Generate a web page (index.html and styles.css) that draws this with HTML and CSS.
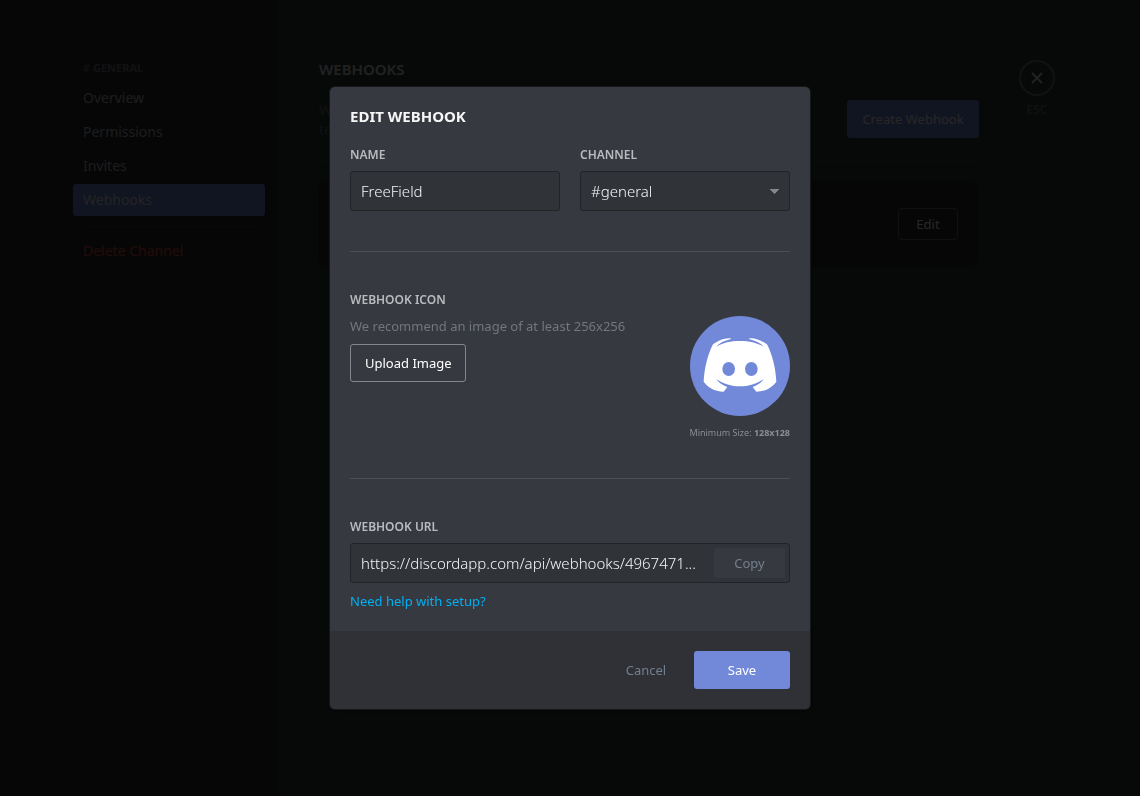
FILE: index.html
```html
<!DOCTYPE html>
<html lang="en">
<head>
<meta charset="utf-8">
<meta name="viewport" content="width=device-width, initial-scale=1">
<title>Edit Webhook</title>
<link rel="stylesheet" href="styles.css">
</head>
<body>
<div class="settings">
  <aside class="sidebar">
    <nav class="nav">
      <h2 class="nav-title"><span class="hash">#</span> General</h2>
      <a class="nav-item" href="#overview">Overview</a>
      <a class="nav-item" href="#permissions">Permissions</a>
      <a class="nav-item" href="#invites">Invites</a>
      <a class="nav-item selected" href="#webhooks">Webhooks</a>
      <hr class="nav-rule">
      <a class="nav-item danger" href="#delete">Delete Channel</a>
    </nav>
  </aside>
  <main class="content">
    <h1 class="content-title">Webhooks</h1>
    <div class="intro">
      <p class="intro-text">We<br>text</p>
      <button class="button primary create" type="button">Create Webhook</button>
    </div>
    <div class="card">
      <button class="button outline edit" type="button">Edit</button>
    </div>
  </main>
  <div class="tools">
    <button class="close" type="button" aria-label="Close settings">
      <svg class="close-icon" viewBox="0 0 12 12" aria-hidden="true"><path d="M1 1L11 11M11 1L1 11"/></svg>
    </button>
    <span class="esc">ESC</span>
  </div>
</div>

<div class="backdrop">
  <form class="modal" role="dialog" aria-labelledby="modal-title">
    <div class="modal-body">
      <h2 class="modal-title" id="modal-title">Edit Webhook</h2>
      <div class="fields">
        <div class="field">
          <label class="label" for="name">Name</label>
          <input class="input" id="name" type="text" value="FreeField">
        </div>
        <div class="field">
          <label class="label" for="channel">Channel</label>
          <select class="input select" id="channel"><option>#general</option></select>
        </div>
      </div>
      <hr class="rule">
      <div class="icon-row">
        <div class="icon-info">
          <h3 class="label">Webhook Icon</h3>
          <p class="hint">We recommend an image of at least 256x256</p>
          <button class="button outline upload" type="button">Upload Image</button>
        </div>
        <div class="icon-preview">
          <svg class="avatar" viewBox="0 0 300 300" role="img" aria-label="Webhook icon">
            <circle cx="150" cy="150" r="150" fill="#7289da"/>
            <path fill="#fff" d="M123 67C104 65 84 74 68 86C53 118 43 154 41 197C54 214 72 226 101 227L112 213C97 208 87 201 79 189C100 204 125 211 150 211C175 211 200 204 221 189C213 201 203 208 188 213L199 227C228 226 246 214 259 197C257 154 247 118 232 86C216 74 196 65 177 67L179 70C197 74 211 81 223 93C201 80 178 75 150 75C122 75 99 80 77 93C89 81 103 74 121 70Z"/>
            <ellipse cx="116" cy="159" rx="19" ry="21" fill="#7289da"/>
            <ellipse cx="184" cy="159" rx="19" ry="21" fill="#7289da"/>
          </svg>
          <p class="caption">Minimum Size: <strong>128x128</strong></p>
        </div>
      </div>
      <hr class="rule">
      <div class="field">
        <label class="label" for="url">Webhook URL</label>
        <div class="input copy-box">
          <input class="url" id="url" type="text" readonly value="https://discordapp.com/api/webhooks/4967471...">
          <button class="copy" type="button">Copy</button>
        </div>
      </div>
      <a class="help" href="#help">Need help with setup?</a>
    </div>
    <div class="modal-footer">
      <button class="button cancel" type="button">Cancel</button>
      <button class="button primary save" type="submit">Save</button>
    </div>
  </form>
</div>
</body>
</html>
```
FILE: styles.css
```css
* { box-sizing: border-box; }

body {
  margin: 0;
  background: #303b36;
  color: #fff;
  font-family: "Noto Sans", "Open Sans", sans-serif;
  font-size: 13px;
  line-height: 20px;
}

h1, h2, h3, p { margin: 0; }
a { text-decoration: none; }
button, input, select { font: inherit; }
button { cursor: pointer; }

.settings {
  display: grid;
  grid-template-columns: 279px 1fr 161px;
  min-height: 100vh;
}

.sidebar {
  display: flex;
  justify-content: flex-end;
  padding: 60px 14px 60px 0;
  background: #2d2d2d;
}
.nav {
  display: flex;
  flex-direction: column;
  gap: 2px;
  width: 192px;
}
.nav-title {
  padding: 0 10px;
  margin-bottom: 4px;
  color: #72767d;
  font-size: 11px;
  line-height: 16px;
  text-transform: uppercase;
}
.hash { font-weight: 400; }
.nav-item {
  padding: 6px 10px;
  border-radius: 3px;
  color: #b9bbbe;
  font-size: 14px;
}
.nav-item.selected { background: #7289da; color: #e8e8e8; }
.nav-item.danger { color: #f04747; }
.nav-rule {
  width: 172px;
  height: 1px;
  margin: 8px 10px 6px;
  border: 0;
  background: #3c3f45;
}

.content { padding: 60px 0 60px 40px; }
.content-title {
  color: #dcddde;
  font-size: 15px;
  font-weight: 600;
  line-height: 18px;
  text-transform: uppercase;
}
.intro {
  display: flex;
  gap: 20px;
  align-items: flex-start;
  padding: 22px 0 20px;
  border-bottom: 1px solid #3d4744;
}
.intro-text {
  flex: 1;
  min-height: 40px;
  color: #72767d;
  font-size: 14px;
}
.card {
  display: flex;
  justify-content: flex-end;
  margin-top: 20px;
  padding: 26px 20px;
  border: 1px solid #202225;
  border-radius: 5px;
  background: #2d2d2d;
}

.tools {
  display: flex;
  flex-direction: column;
  align-items: flex-start;
  gap: 4px;
  padding: 60px 0 0 40px;
}
.close {
  display: grid;
  place-items: center;
  width: 36px;
  height: 36px;
  padding: 0;
  border: 2px solid #72767d;
  border-radius: 50%;
  background: none;
}
.close-icon {
  width: 12px;
  height: 12px;
  fill: none;
  stroke: #dcddde;
  stroke-width: 2;
}
.esc {
  width: 36px;
  color: #72767d;
  font-size: 12px;
  font-weight: 500;
  text-align: center;
}

.button {
  height: 38px;
  padding: 0 14px;
  border: 1px solid transparent;
  border-radius: 3px;
  background: none;
  color: #fff;
  white-space: nowrap;
}
.primary { background: #7289da; }
.outline { border-color: #84868a; }
.create { width: 132px; }
.upload { width: 116px; }
.edit { width: 60px; height: 32px; border-color: #6b6b6b; }

.backdrop {
  position: fixed;
  inset: 0;
  display: grid;
  place-items: center;
  overflow: auto;
  background: rgba(0, 0, 0, .85);
}
.modal {
  width: 100%;
  max-width: 480px;
  overflow: hidden;
  border-radius: 5px;
  background: #36393f;
  box-shadow: 0 0 0 1px rgba(32, 34, 37, .6), 0 2px 10px rgba(0, 0, 0, .2);
}
.modal-body { padding: 20px; }
.modal-title {
  margin-bottom: 22px;
  color: #f6f6f7;
  font-size: 15px;
  font-weight: 700;
  line-height: 18px;
  text-transform: uppercase;
}
.fields {
  display: grid;
  grid-template-columns: 1fr 1fr;
  gap: 20px;
}
.field {
  display: flex;
  flex-direction: column;
  gap: 8px;
}
.label {
  color: #b9bbbe;
  font-size: 12px;
  font-weight: 600;
  line-height: 16px;
  text-transform: uppercase;
}
.input {
  width: 100%;
  height: 40px;
  padding: 0 10px;
  border: 1px solid #222427;
  border-radius: 3px;
  background: #303338;
  color: #f6f6f7;
  font-size: 15px;
  font-weight: 300;
}
.select {
  appearance: none;
  background:
    linear-gradient(to bottom left, #84868a 50%, transparent 50%) right 15px center / 5px 5px no-repeat,
    linear-gradient(to bottom right, #84868a 50%, transparent 50%) right 10px center / 5px 5px no-repeat,
    #303338;
}
.rule {
  height: 1px;
  margin: 40px 0;
  border: 0;
  background: #4b4e55;
}
.icon-row {
  display: flex;
  justify-content: space-between;
}
.hint {
  margin: 8px 0;
  color: #72767d;
}
.icon-preview {
  display: flex;
  flex-direction: column;
  align-items: flex-end;
  gap: 8px;
  padding-top: 24px;
}
.avatar { width: 100px; height: 100px; }
.caption {
  height: 14px;
  color: #8a8e94;
  font-size: 9px;
  line-height: 18px;
  white-space: nowrap;
}
.copy-box {
  display: flex;
  align-items: center;
  gap: 4px;
  padding: 0 4px 0 10px;
}
.url {
  flex: 1;
  min-width: 0;
  height: 38px;
  padding: 0;
  border: 0;
  outline: 0;
  background: none;
  color: inherit;
  text-overflow: ellipsis;
}
.copy {
  width: 71px;
  height: 30px;
  padding: 0;
  border: 0;
  border-radius: 3px;
  background: #36393f;
  color: #747f8d;
  font-size: 13px;
  font-weight: 400;
}
.help {
  display: block;
  margin-top: 8px;
  color: #00b0f4;
}
.modal-footer {
  display: flex;
  justify-content: flex-end;
  padding: 20px;
  background: #2f3136;
}
.cancel { width: 96px; color: #747f8d; }
.save { width: 96px; }
```
